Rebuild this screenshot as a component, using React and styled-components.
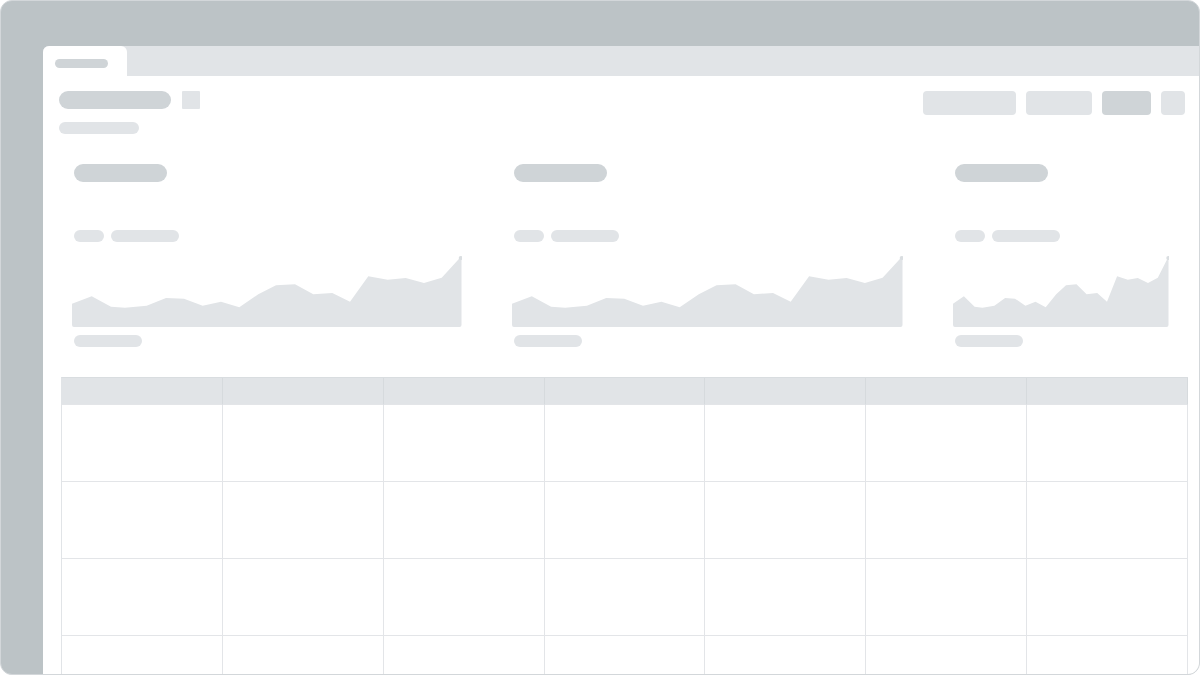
import styled, { createGlobalStyle } from "styled-components";

const GlobalStyle = createGlobalStyle`
  html, body {
    margin: 0;
    padding: 0;
    background: #ffffff;
    font-family: "Liberation Sans", Arial, sans-serif;
  }
  * { box-sizing: border-box; }
`;

// chart data, measured on a 390 x 71 box
const series = [
  [0, 47.7], [19.7, 40.3], [39, 50.7], [53, 51.7], [74.7, 49.7], [94, 42],
  [112, 42.7], [130.7, 49.7], [149, 45.7], [167.3, 51.3], [186.3, 38.3],
  [204, 29.3], [223, 28.3], [241.3, 38.3], [260.3, 37], [278, 45.7],
  [296.3, 20.3], [315.7, 23.7], [333.7, 22], [352, 27], [369.7, 21.7], [388.7, 1],
];

const Frame = styled.div`
  width: 1200px;
  height: 675px;
  background: #bcc3c6;
  border: 1px solid #d3d7da;
  border-radius: 12px;
  overflow: hidden;
  display: flex;
  flex-direction: column;
  padding: 45px 0 0 42px;
`;

const Window = styled.div`
  flex: 1;
  background: #ffffff;
  border-top-left-radius: 6px;
  display: flex;
  flex-direction: column;
  overflow: hidden;
`;

const TabBar = styled.div`
  height: 30px;
  background: #e1e4e7;
  display: flex;
  flex-shrink: 0;
`;

const Tab = styled.div`
  width: 84px;
  background: #ffffff;
  border-radius: 6px 6px 0 0;
  padding: 13px 0 0 12px;
`;

const Pill = styled.div`
  width: ${(p) => p.w}px;
  height: ${(p) => p.h || 12}px;
  border-radius: ${(p) => (p.h || 12) / 2}px;
  background: ${(p) => (p.dark ? "#cfd4d7" : "#e1e4e7")};
  flex-shrink: 0;
`;

const Content = styled.div`
  padding: 15px 12px 0 16px;
  display: flex;
  flex-direction: column;
`;

const Header = styled.div`
  display: flex;
  justify-content: space-between;
  align-items: flex-start;
`;

const TitleBlock = styled.div`
  display: flex;
  flex-direction: column;
  gap: 13px;
`;

const TitleRow = styled.div`
  display: flex;
  align-items: center;
  gap: 11px;
`;

const Square = styled.div`
  width: 18px;
  height: 18px;
  border-radius: 1px;
  background: #e1e4e7;
`;

const Actions = styled.div`
  display: flex;
  gap: 9px;
  margin-right: 2px;
`;

const Button = styled.div`
  width: ${(p) => p.w}px;
  height: 24px;
  border-radius: 4px;
  background: ${(p) => (p.dark ? "#cfd4d7" : "#e1e4e7")};
  & + & {
    margin-left: ${(p) => (p.last ? 1 : 0)}px;
  }
`;

const Cards = styled.div`
  display: grid;
  grid-template-columns: 390px 391px 216px;
  column-gap: 50px;
  margin: 30px 0 0 13px;
`;

const Card = styled.div`
  display: flex;
  flex-direction: column;
  & > ${Pill} {
    margin-left: 2px;
  }
`;

const Labels = styled.div`
  display: flex;
  gap: 7px;
  margin: 48px 0 14px 2px;
`;

const ChartSvg = styled.svg`
  display: block;
  margin-bottom: 8px;
`;

const Table = styled.div`
  display: grid;
  grid-template-columns: repeat(7, 1fr);
  margin: 30px -1px 0 2px;
  border-left: 1px solid #e1e4e7;
  border-top: 1px solid #d9dde0;
`;

const Cell = styled.div`
  height: ${(p) => (p.head ? 27 : 77)}px;
  background: ${(p) => (p.head ? "#e1e4e7" : "#ffffff")};
  border-right: 1px solid ${(p) => (p.head ? "#d6dadd" : "#e3e5e8")};
  border-bottom: 1px solid #e3e5e8;
`;

const Chart = ({ width }) => {
  const k = width / 390;
  const pts = series.map(([x, y]) => [x * k, y]);
  const last = pts[pts.length - 1];
  const line = pts.map(([x, y], i) => `${i ? "L" : "M"}${x.toFixed(1)},${y}`).join(" ");
  const r = width - 0.5;
  const d = `${line} L${r},4 L${r},69 Q${r},71 ${r - 2},71 L2,71 Q0,71 0,69 Z`;
  return (
    <ChartSvg width={width} height={71} viewBox={`0 0 ${width} 71`}>
      <path d={d} fill="#e1e4e7" />
      <circle cx={last[0]} cy={last[1] + 1} r="2" fill="#dadee1" />
    </ChartSvg>
  );
};

const cards = [390, 391, 216];

const App = () => (
  <>
    <GlobalStyle />
    <Frame>
      <Window>
        <TabBar>
          <Tab>
            <Pill w={53} h={9} dark />
          </Tab>
        </TabBar>
        <Content>
          <Header>
            <TitleBlock>
              <TitleRow>
                <Pill w={112} h={18} dark />
                <Square />
              </TitleRow>
              <Pill w={80} h={12} />
            </TitleBlock>
            <Actions>
              <Button w={93} />
              <Button w={66} />
              <Button w={49} dark />
              <Button w={24} last />
            </Actions>
          </Header>
          <Cards>
            {cards.map((w, i) => (
              <Card key={i}>
                <Pill w={93} h={18} dark />
                <Labels>
                  <Pill w={30} />
                  <Pill w={68} />
                </Labels>
                <Chart width={w} />
                <Pill w={68} />
              </Card>
            ))}
          </Cards>
          <Table>
            {Array.from({ length: 7 }).map((_, i) => (
              <Cell head key={`h${i}`} />
            ))}
            {Array.from({ length: 28 }).map((_, i) => (
              <Cell key={i} />
            ))}
          </Table>
        </Content>
      </Window>
    </Frame>
  </>
);

export default App;
